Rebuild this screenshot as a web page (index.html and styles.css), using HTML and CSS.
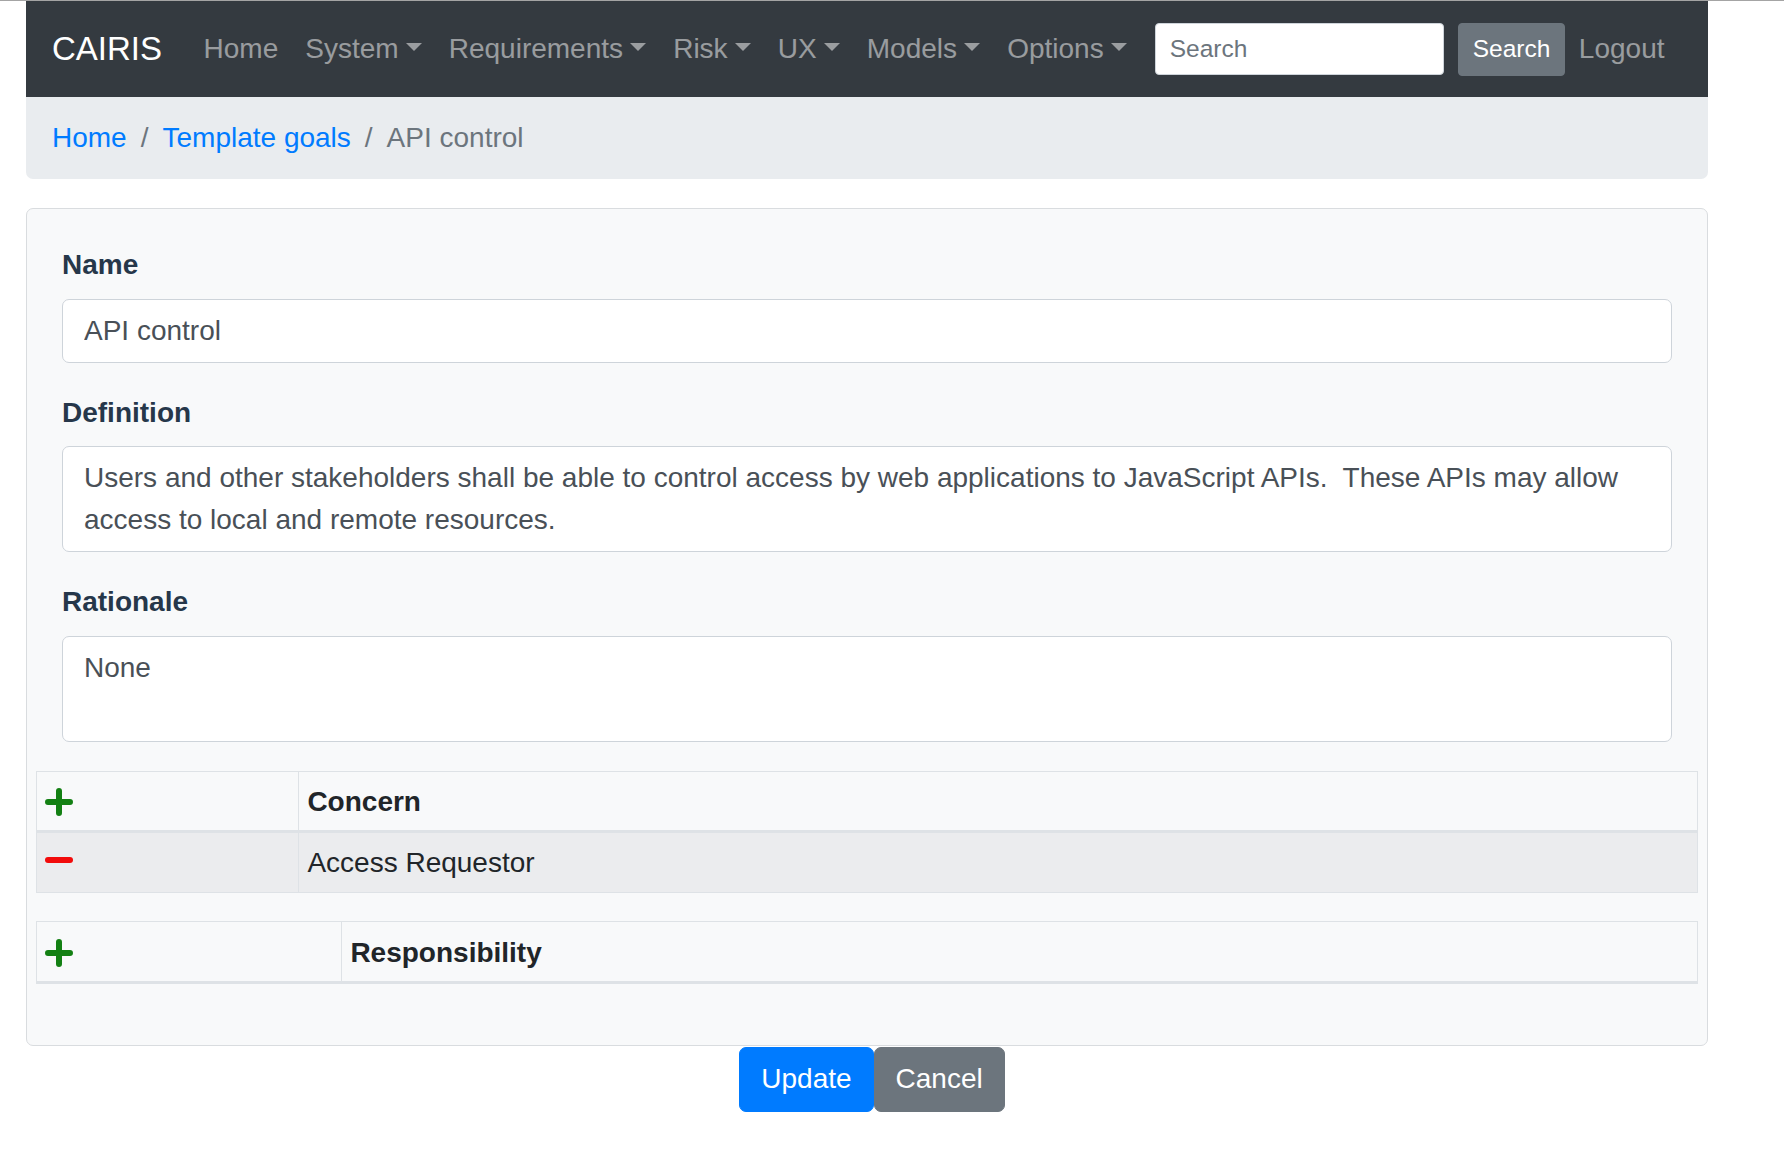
FILE: index.html
```html
<!DOCTYPE html>
<html lang="en">
<head>
<meta charset="utf-8">
<title>CAIRIS - API control</title>
<link rel="stylesheet" href="styles.css">
</head>
<body>
<div class="page">
  <nav class="navbar">
    <a class="brand" href="#">CAIRIS</a>
    <ul class="nav">
      <li><a class="nav-link" href="#">Home</a></li>
      <li><a class="nav-link dropdown" href="#">System</a></li>
      <li><a class="nav-link dropdown" href="#">Requirements</a></li>
      <li><a class="nav-link dropdown" href="#">Risk</a></li>
      <li><a class="nav-link dropdown" href="#">UX</a></li>
      <li><a class="nav-link dropdown" href="#">Models</a></li>
      <li><a class="nav-link dropdown" href="#">Options</a></li>
    </ul>
    <form class="search-form">
      <input class="search-input" type="text" placeholder="Search">
      <button class="search-btn" type="button">Search</button>
    </form>
    <a class="nav-link" href="#">Logout</a>
  </nav>

  <ol class="breadcrumb">
    <li><a href="#">Home</a></li>
    <li class="sep">/</li>
    <li><a href="#">Template goals</a></li>
    <li class="sep">/</li>
    <li class="active">API control</li>
  </ol>

  <div class="card">
    <div class="form-group">
      <label class="label">Name</label>
      <input class="form-control" type="text" value="API control">
    </div>
    <div class="form-group">
      <label class="label">Definition</label>
      <textarea class="form-control area" rows="2">Users and other stakeholders shall be able to control access by web applications to JavaScript APIs.  These APIs may allow access to local and remote resources.</textarea>
    </div>
    <div class="form-group">
      <label class="label">Rationale</label>
      <textarea class="form-control area" rows="2">None</textarea>
    </div>

    <div class="row">
      <table class="tbl">
        <thead>
          <tr>
            <th class="col-icon col-icon-a">
              <svg class="icon" viewBox="0 0 28 28" width="28" height="28"><path d="M14 3 V25 M3 14 H25" stroke="#138013" stroke-width="6" stroke-linecap="round" fill="none"/></svg>
            </th>
            <th>Concern</th>
          </tr>
        </thead>
        <tbody>
          <tr class="striped">
            <td class="col-icon">
              <svg class="icon" viewBox="0 0 28 28" width="28" height="28"><path d="M3 11 H25" stroke="#f20b0b" stroke-width="6" stroke-linecap="round" fill="none"/></svg>
            </td>
            <td>Access Requestor</td>
          </tr>
        </tbody>
      </table>
    </div>

    <div class="row">
      <table class="tbl">
        <thead>
          <tr>
            <th class="col-icon col-icon-b">
              <svg class="icon" viewBox="0 0 28 28" width="28" height="28"><path d="M14 3 V25 M3 14 H25" stroke="#138013" stroke-width="6" stroke-linecap="round" fill="none"/></svg>
            </th>
            <th>Responsibility</th>
          </tr>
        </thead>
      </table>
    </div>
  </div>

  <div class="actions"><button class="btn btn-primary" type="button">Update</button><button class="btn btn-secondary" type="button">Cancel</button></div>
</div>
</body>
</html>
```

FILE: styles.css
```css
* {
  box-sizing: border-box;
}

html, body {
  margin: 0;
  padding: 0;
  background: #fff;
}

body {
  border-top: 1px solid #a4a4a4;
  font-family: "Liberation Sans", Arial, Helvetica, sans-serif;
  font-size: 28px;
  line-height: 1.5;
  color: #212529;
}

.page {
  margin-left: 26px;
  width: 1682px;
}

/* Navbar */
.navbar {
  display: flex;
  align-items: center;
  background: #343a40;
  height: 96px;
  padding: 0 30px 0 26px;
}

.brand {
  color: #fff;
  font-size: 33px;
  line-height: 1.5;
  text-decoration: none;
  margin-right: 28px;
  white-space: nowrap;
}

.nav {
  display: flex;
  list-style: none;
  margin: 0;
  padding: 0;
}

.nav-link {
  display: block;
  padding: 14px 13.5px;
  line-height: 42px;
  color: rgba(255, 255, 255, 0.5);
  text-decoration: none;
  white-space: nowrap;
}

.dropdown::after {
  content: "";
  display: inline-block;
  margin-left: 0.255em;
  vertical-align: 0.255em;
  border-top: 0.3em solid;
  border-right: 0.3em solid transparent;
  border-left: 0.3em solid transparent;
  border-bottom: 0;
}

.search-form {
  display: flex;
  align-items: center;
  margin-left: auto;
}

.search-input {
  width: 289px;
  height: 52px;
  padding: 7px 14px;
  font-family: "Liberation Sans", Arial, Helvetica, sans-serif;
  font-size: 24.5px;
  color: #495057;
  background: #fff;
  border: 1px solid #ced4da;
  border-radius: 4px;
  margin-right: 14px;
  outline: none;
}

.search-input::placeholder {
  color: #6c757d;
}

.search-btn {
  height: 53px;
  padding: 7px 14px;
  font-family: "Liberation Sans", Arial, Helvetica, sans-serif;
  font-size: 24.5px;
  color: #fff;
  background: #6c757d;
  border: 1px solid #6c757d;
  border-radius: 4px;
}

/* Breadcrumb */
.breadcrumb {
  display: flex;
  list-style: none;
  margin: 0 0 29px 0;
  padding: 20px 26px;
  background: #e9ecef;
  border-radius: 0 0 7px 7px;
  line-height: 42px;
}

.breadcrumb a {
  color: #007bff;
  text-decoration: none;
}

.breadcrumb .sep {
  padding: 0 14px;
  color: #6c757d;
}

.breadcrumb .active {
  color: #6c757d;
}

/* Card */
.card {
  background: #f8f9fa;
  border: 1px solid #d9dcdf;
  border-radius: 7px;
  padding: 35px 35px 33px 35px;
}

.form-group {
  margin-bottom: 29px;
}

.label {
  display: block;
  font-weight: bold;
  color: #26374a;
  line-height: 42px;
  margin-bottom: 12.5px;
}

.form-control {
  display: block;
  width: 100%;
  height: 64px;
  padding: 10px 21px;
  font-family: "Liberation Sans", Arial, Helvetica, sans-serif;
  font-size: 28px;
  line-height: 42px;
  color: #495057;
  background: #fff;
  border: 1px solid #ced4da;
  border-radius: 7px;
  outline: none;
}

.area {
  height: 106px;
  resize: none;
  overflow: hidden;
}

/* Tables */
.row {
  margin: 0 -26px;
}

.tbl {
  width: 100%;
  border-collapse: collapse;
  margin-bottom: 28px;
  color: #212529;
}

.tbl th,
.tbl td {
  border: 1px solid #dee2e6;
  padding: 8.4px;
  line-height: 42px;
  text-align: left;
  vertical-align: top;
}

.tbl thead th {
  border-bottom: 3.5px solid #dee2e6;
  font-weight: bold;
  padding-top: 9.5px;
  padding-bottom: 7.3px;
}

.col-icon-a {
  width: 262px;
}

.col-icon-b {
  width: 305px;
}

.striped td {
  background: #ebecee;
}

.icon {
  display: block;
  margin-top: 7px;
}

/* Actions */
.actions {
  display: flex;
  justify-content: center;
  padding-left: 10px;
  padding-top: 1px;
}

.btn {
  padding: 10.5px 21px;
  font-family: "Liberation Sans", Arial, Helvetica, sans-serif;
  font-size: 28px;
  line-height: 42px;
  color: #fff;
  border-radius: 7px;
  border: 1px solid transparent;
}

.btn-primary {
  background: #007bff;
  border-color: #007bff;
}

.btn-secondary {
  background: #6c757d;
  border-color: #6c757d;
}
```
